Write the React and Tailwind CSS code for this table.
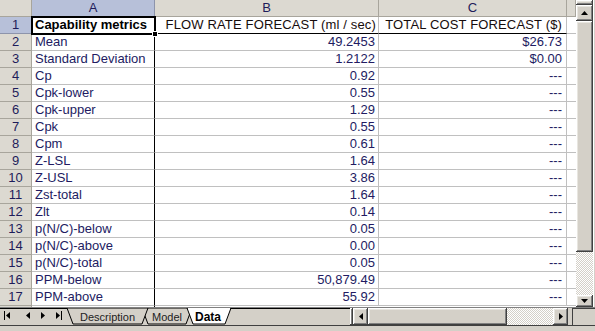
import React from 'react';

const rows = [
  ['Mean', '49.2453', '$26.73'],
  ['Standard Deviation', '1.2122', '$0.00'],
  ['Cp', '0.92', '---'],
  ['Cpk-lower', '0.55', '---'],
  ['Cpk-upper', '1.29', '---'],
  ['Cpk', '0.55', '---'],
  ['Cpm', '0.61', '---'],
  ['Z-LSL', '1.64', '---'],
  ['Z-USL', '3.86', '---'],
  ['Zst-total', '1.64', '---'],
  ['Zlt', '0.14', '---'],
  ['p(N/C)-below', '0.05', '---'],
  ['p(N/C)-above', '0.00', '---'],
  ['p(N/C)-total', '0.05', '---'],
  ['PPM-below', '50,879.49', '---'],
  ['PPM-above', '55.92', '---'],
];

const bevel = 'shadow-[inset_-1px_-1px_#404040,inset_1px_1px_#ffffff,inset_-2px_-2px_#808080,inset_2px_2px_#e8e6e0] bg-[#d4d0c8]';
const dither = 'bg-[repeating-conic-gradient(#d4d0c8_0_25%,#ffffff_0_50%)] bg-[length:2px_2px]';

function Arrow({ dir }) {
  const pts = {
    up: '0,4 7,4 3.5,0',
    down: '0,0 7,0 3.5,4',
    left: '4,0 4,7 0,3.5',
    right: '0,0 0,7 4,3.5',
  }[dir];
  const vertical = dir === 'up' || dir === 'down';
  return (
    <svg width={vertical ? 7 : 4} height={vertical ? 4 : 7}>
      <polygon points={pts} fill="#000" />
    </svg>
  );
}

function ColHead({ label, w, sel }) {
  return (
    <div
      className={`${w} h-[17px] shrink-0 flex items-center justify-center border-r border-b ${
        sel ? 'bg-[#b7c0d9] border-b-[#1d2a5c] border-r-[#8d94ab]' : 'bg-[#dcd9d1] border-[#a8a59c]'
      } text-[13px] text-[#1e1c5a]`}
    >
      {label}
    </div>
  );
}

function RowHead({ n, sel }) {
  return (
    <div
      className={`w-[32px] h-[17px] shrink-0 flex items-center justify-center border-r border-b ${
        sel ? 'bg-[#b7c0d9] border-r-[#1d2a5c] border-b-[#8d94ab]' : 'bg-[#dcd9d1] border-[#a8a59c]'
      } text-[13px] text-[#1e1c5a]`}
    >
      {n}
    </div>
  );
}

export default function App() {
  return (
    <div
      className="w-[595px] h-[331px] bg-[#d4d0c8] flex flex-col overflow-hidden"
      style={{ fontFamily: '"Liberation Sans", Arial, sans-serif' }}
    >
      <div className="flex h-[307px]">
        {/* grid */}
        <div className="relative w-[576px] h-[307px] overflow-hidden bg-white">
          <div className="flex">
            <div className="w-[32px] h-[17px] shrink-0 bg-[#dcd9d1] border-r border-b border-[#a8a59c]" />
            <ColHead label="A" w="w-[123px]" sel />
            <ColHead label="B" w="w-[224px]" />
            <ColHead label="C" w="w-[188px]" />
            <ColHead label="" w="w-[9px]" />
          </div>

          <div className="flex">
            <RowHead n={1} sel />
            <div className="w-[123px] h-[17px] shrink-0 border-r border-b border-black flex items-center pl-[3px] text-[13px] font-bold text-black whitespace-nowrap">
              Capability metrics
            </div>
            <div className="w-[224px] h-[17px] shrink-0 border-r border-r-[#c0c0c0] border-b border-b-black flex items-center justify-end pr-[2px] text-[13px] text-[#160c0c] whitespace-nowrap tracking-[0.15px]">
              FLOW RATE FORECAST (ml / sec)
            </div>
            <div className="w-[188px] h-[17px] shrink-0 border-r border-r-[#c0c0c0] border-b border-b-black flex items-center justify-end pr-[4px] text-[13px] text-[#160c0c] whitespace-nowrap tracking-[0.15px]">
              TOTAL COST FORECAST ($)
            </div>
            <div className="w-[9px] h-[17px] shrink-0 border-b border-[#c0c0c0]" />
          </div>

          {rows.map((r, i) => (
            <div key={i} className="flex">
              <RowHead n={i + 2} />
              <div className="w-[123px] h-[17px] shrink-0 border-r border-r-black border-b border-b-[#c0c0c0] flex items-center pl-[3px] text-[13px] text-[#221b62] whitespace-nowrap">
                {r[0]}
              </div>
              <div className="w-[224px] h-[17px] shrink-0 border-r border-b border-[#c0c0c0] flex items-center justify-end pr-[3px] text-[13px] text-[#221b62]">
                {r[1]}
              </div>
              <div className="w-[188px] h-[17px] shrink-0 border-r border-b border-[#c0c0c0] flex items-center justify-end pr-[4px] text-[13px] text-[#221b62]">
                {r[2]}
              </div>
              <div className="w-[9px] h-[17px] shrink-0 border-b border-[#c0c0c0]" />
            </div>
          ))}
          <div className="flex">
            <div className="w-[32px] h-[17px] shrink-0 bg-[#dcd9d1] border-r border-[#a8a59c]" />
            <div className="w-[123px] h-[17px] shrink-0 border-r border-black" />
          </div>

          {/* active cell outline + fill handle */}
          <div className="absolute left-[31px] top-[16px] w-[125px] h-[19px] border-2 border-black pointer-events-none" />
          <div className="absolute left-[152px] top-[31px] w-[6px] h-[6px] bg-black border border-white pointer-events-none" />
        </div>

        {/* vertical scrollbar */}
        <div className="w-[17px] h-[307px] flex flex-col">
          <div className={`h-[5px] ${bevel}`} />
          <div className={`h-[16px] flex items-center justify-center ${bevel}`}>
            <Arrow dir="up" />
          </div>
          <div className={`h-[231px] ${bevel}`} />
          <div className={`flex-1 ${dither}`} />
          <div className={`h-[12px] flex items-center justify-center ${bevel}`}>
            <Arrow dir="down" />
          </div>
        </div>
        <div className="flex-1 bg-[#d4d0c8] border-l border-[#ffffff]" />
      </div>

      {/* tab bar */}
      <div className="h-[18px] flex border-t border-[#808080]">
        <div className="relative w-[350px] h-[17px] shrink-0">
          <svg width="350" height="17" className="absolute left-0 top-0">
            <line x1="0" y1="0.5" x2="350" y2="0.5" stroke="#000" />
            <polygon points="4,3 4,12 5,12 5,3" fill="#000" />
            <polygon points="10,4 10,11 6,7.5" fill="#000" />
            <polygon points="30,4 30,11 26,7.5" fill="#000" />
            <polygon points="41,4 41,11 45,7.5" fill="#000" />
            <polygon points="56,4 56,11 60,7.5" fill="#000" />
            <polygon points="61,3 61,12 62,12 62,3" fill="#000" />

            <polygon points="142,0 148,16 186,16 192,0" fill="#d4d0c8" stroke="#000" strokeWidth="1" />
            <polygon points="67,0 73,16 142,16 148,0" fill="#d4d0c8" stroke="#000" strokeWidth="1" />
            <polygon points="187,0 193,16 225,16 231,0" fill="#ffffff" stroke="#000" strokeWidth="1" />
            <line x1="188" y1="0.5" x2="230" y2="0.5" stroke="#ffffff" />

            <text x="80" y="12.5" fontSize="11" fill="#222" fontFamily="Liberation Sans, Arial, sans-serif">Description</text>
            <text x="152" y="12.5" fontSize="11" fill="#222" fontFamily="Liberation Sans, Arial, sans-serif">Model</text>
            <text x="195" y="12.5" fontSize="12" fontWeight="bold" fill="#000" fontFamily="Liberation Sans, Arial, sans-serif">Data</text>
          </svg>
        </div>
        <div className={`w-[3px] h-[17px] shrink-0 ${bevel}`} />
        <div className={`w-[15px] h-[17px] shrink-0 flex items-center justify-center ${bevel}`}>
          <Arrow dir="left" />
        </div>
        <div className={`w-[139px] h-[17px] shrink-0 ${bevel}`} />
        <div className={`w-[46px] h-[17px] shrink-0 ${dither}`} />
        <div className={`w-[15px] h-[17px] shrink-0 flex items-center justify-center ${bevel}`}>
          <Arrow dir="right" />
        </div>
        <div className="w-[4px] h-[17px] shrink-0" />
        <div className="flex-1 h-[17px] border-l border-t border-[#404040] bg-[#d4d0c8]" />
      </div>

      <div className="flex-1 border-t border-[#404040] bg-[#d4d0c8]" />
    </div>
  );
}
